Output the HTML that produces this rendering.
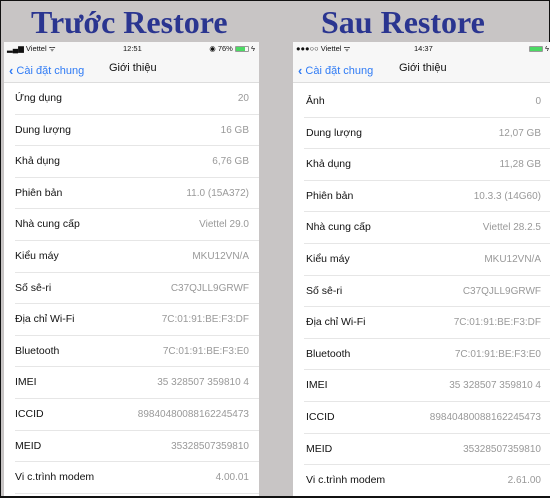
<!DOCTYPE html>
<html><head><meta charset="utf-8"><style>
*{margin:0;padding:0;box-sizing:border-box}
body{width:550px;height:498px;background:#c8c5c5;position:relative;overflow:hidden;font-family:"Liberation Sans",sans-serif;border:1px solid #111;border-bottom:2px solid #111}
.t{position:absolute;top:3px;font-family:"Liberation Serif",serif;font-weight:bold;font-size:32px;color:#2a3590;white-space:nowrap}
.p{position:absolute;top:41px;bottom:0;background:#fff;overflow:hidden}
.sb{height:13px;background:#f7f7f7;font-size:7.5px;color:#111;position:relative}
.nav{height:28px;background:#f7f7f7;border-bottom:1px solid #ddd;position:relative;font-size:11px}
.back{position:absolute;left:5px;top:7px;color:#2f7bf5}
.title{position:absolute;top:7px;color:#111}
.row{height:31.6px;position:relative;font-size:10.5px;color:#111}
.row:after{content:"";position:absolute;left:11px;right:0;bottom:0;border-bottom:1px solid #e6e6e6}
.row .l{position:absolute;left:11px;top:9px}
.row .v{position:absolute;right:10px;top:10px;color:#999;font-size:10px}
.bat{display:inline-block;width:14px;height:6px;border:1px solid #999;border-radius:1px;vertical-align:middle;position:relative}
.bat i{position:absolute;left:0;top:0;bottom:0;background:#4cd964}
</style></head><body>
<div class="t" style="left:30px">Trước Restore</div>
<div class="t" style="left:320px">Sau Restore</div>

<div class="p" style="left:3px;width:255px">
 <div class="sb"><span style="position:absolute;left:3px;top:2px">▂▄▆ Viettel ᯤ</span><span style="position:absolute;left:119px;top:2px">12:51</span><span style="position:absolute;right:4px;top:2px">◉ 76% <span class="bat"><i style="width:76%"></i></span> ϟ</span></div>
 <div class="nav"><span class="back"><b style="font-size:13px;position:relative;top:1px">‹</b> Cài đặt chung</span><span class="title" style="left:105px">Giới thiệu</span></div>
 <div class="row"><span class="l">Ứng dụng</span><span class="v">20</span></div>
 <div class="row"><span class="l">Dung lượng</span><span class="v">16 GB</span></div>
 <div class="row"><span class="l">Khả dụng</span><span class="v">6,76 GB</span></div>
 <div class="row"><span class="l">Phiên bản</span><span class="v">11.0 (15A372)</span></div>
 <div class="row"><span class="l">Nhà cung cấp</span><span class="v">Viettel 29.0</span></div>
 <div class="row"><span class="l">Kiểu máy</span><span class="v">MKU12VN/A</span></div>
 <div class="row"><span class="l">Số sê-ri</span><span class="v">C37QJLL9GRWF</span></div>
 <div class="row"><span class="l">Địa chỉ Wi-Fi</span><span class="v">7C:01:91:BE:F3:DF</span></div>
 <div class="row"><span class="l">Bluetooth</span><span class="v">7C:01:91:BE:F3:E0</span></div>
 <div class="row"><span class="l">IMEI</span><span class="v">35 328507 359810 4</span></div>
 <div class="row"><span class="l">ICCID</span><span class="v">89840480088162245473</span></div>
 <div class="row"><span class="l">MEID</span><span class="v">35328507359810</span></div>
 <div class="row"><span class="l">Vi c.trình modem</span><span class="v">4.00.01</span></div>
</div>

<div class="p" style="left:292px;width:258px">
 <div class="sb"><span style="position:absolute;left:3px;top:2px">●●●○○ Viettel ᯤ</span><span style="position:absolute;left:121px;top:2px">14:37</span><span style="position:absolute;right:2px;top:2px"><span class="bat"><i style="width:100%"></i></span> ϟ</span></div>
 <div class="nav"><span class="back"><b style="font-size:13px;position:relative;top:1px">‹</b> Cài đặt chung</span><span class="title" style="left:106px">Giới thiệu</span></div>
 <div style="height:3px"></div>
 <div class="row"><span class="l" style="left:13px">Ảnh</span><span class="v">0</span></div>
 <div class="row"><span class="l" style="left:13px">Dung lượng</span><span class="v">12,07 GB</span></div>
 <div class="row"><span class="l" style="left:13px">Khả dụng</span><span class="v">11,28 GB</span></div>
 <div class="row"><span class="l" style="left:13px">Phiên bản</span><span class="v">10.3.3 (14G60)</span></div>
 <div class="row"><span class="l" style="left:13px">Nhà cung cấp</span><span class="v">Viettel 28.2.5</span></div>
 <div class="row"><span class="l" style="left:13px">Kiểu máy</span><span class="v">MKU12VN/A</span></div>
 <div class="row"><span class="l" style="left:13px">Số sê-ri</span><span class="v">C37QJLL9GRWF</span></div>
 <div class="row"><span class="l" style="left:13px">Địa chỉ Wi-Fi</span><span class="v">7C:01:91:BE:F3:DF</span></div>
 <div class="row"><span class="l" style="left:13px">Bluetooth</span><span class="v">7C:01:91:BE:F3:E0</span></div>
 <div class="row"><span class="l" style="left:13px">IMEI</span><span class="v">35 328507 359810 4</span></div>
 <div class="row"><span class="l" style="left:13px">ICCID</span><span class="v">89840480088162245473</span></div>
 <div class="row"><span class="l" style="left:13px">MEID</span><span class="v">35328507359810</span></div>
 <div class="row"><span class="l" style="left:13px">Vi c.trình modem</span><span class="v">2.61.00</span></div>
</div>
</body></html>
